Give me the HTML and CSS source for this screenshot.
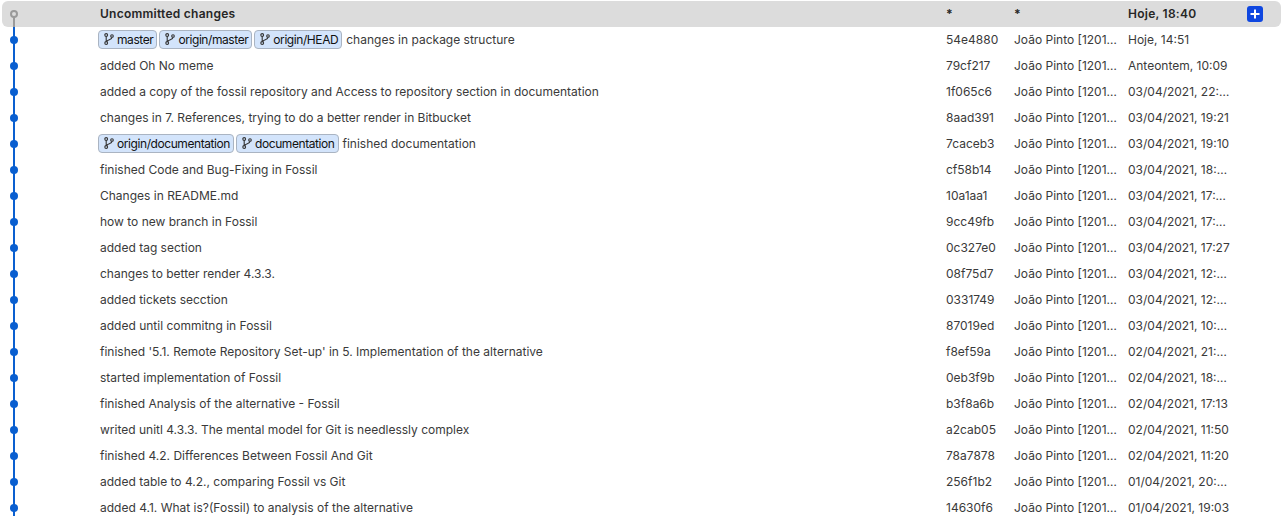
FILE: index.html
```html
<!DOCTYPE html>
<html lang="en">
<head>
    <meta charset="UTF-8">
    <meta name="viewport" content="width=device-width, initial-scale=1.0">
    <title>Commit history</title>
    <link rel="stylesheet" href="styles.css">
</head>
<body>
    <svg class="icon-defs" width="0" height="0">
        <symbol id="branch" viewBox="0 0 10 12">
            <circle cx="2.2" cy="2" r="1.4"/>
            <circle cx="2.2" cy="10" r="1.4"/>
            <circle cx="8" cy="3" r="1.3"/>
            <path d="M2.2 3.4V8.6M8 4.3C8 7 3.4 6.4 2.6 8.7"/>
        </symbol>
    </svg>

    <div class="history">
        <!-- Uncommitted changes -->
        <div class="row row-head">
            <div class="graph graph-first"><span class="dot dot-open"></span></div>
            <div class="subject">Uncommitted changes</div>
            <div class="hash star">*</div>
            <div class="author star">*</div>
            <div class="date">Hoje, 18:40</div>
            <div class="add"><svg width="16" height="16" viewBox="0 0 16 16"><rect width="16" height="16" rx="3" fill="#0f47e0"/><path d="M8 3.5V12.5M3.5 8H12.5" stroke="#fff" stroke-width="2"/></svg></div>
        </div>

        <div class="row">
            <div class="graph"><span class="dot"></span></div>
            <div class="subject subject-tags">
                <span class="tag"><svg class="tag-icon"><use href="#branch"/></svg>master</span>
                <span class="tag"><svg class="tag-icon"><use href="#branch"/></svg>origin/master</span>
                <span class="tag"><svg class="tag-icon"><use href="#branch"/></svg>origin/HEAD</span>
                <span class="msg">changes in package structure</span>
            </div>
            <div class="hash">54e4880</div>
            <div class="author">João Pinto [1201…</div>
            <div class="date">Hoje, 14:51</div>
        </div>
        <div class="row">
            <div class="graph"><span class="dot"></span></div>
            <div class="subject">added Oh No meme</div>
            <div class="hash">79cf217</div>
            <div class="author">João Pinto [1201…</div>
            <div class="date">Anteontem, 10:09</div>
        </div>
        <div class="row">
            <div class="graph"><span class="dot"></span></div>
            <div class="subject">added a copy of the fossil repository and Access to repository section in documentation</div>
            <div class="hash">1f065c6</div>
            <div class="author">João Pinto [1201…</div>
            <div class="date">03/04/2021, 22:…</div>
        </div>
        <div class="row">
            <div class="graph"><span class="dot"></span></div>
            <div class="subject">changes in 7. References, trying to do a better render in Bitbucket</div>
            <div class="hash">8aad391</div>
            <div class="author">João Pinto [1201…</div>
            <div class="date">03/04/2021, 19:21</div>
        </div>
        <div class="row">
            <div class="graph"><span class="dot"></span></div>
            <div class="subject subject-tags">
                <span class="tag"><svg class="tag-icon"><use href="#branch"/></svg>origin/documentation</span>
                <span class="tag"><svg class="tag-icon"><use href="#branch"/></svg>documentation</span>
                <span class="msg">finished documentation</span>
            </div>
            <div class="hash">7caceb3</div>
            <div class="author">João Pinto [1201…</div>
            <div class="date">03/04/2021, 19:10</div>
        </div>
        <div class="row">
            <div class="graph"><span class="dot"></span></div>
            <div class="subject">finished Code and Bug-Fixing in Fossil</div>
            <div class="hash">cf58b14</div>
            <div class="author">João Pinto [1201…</div>
            <div class="date">03/04/2021, 18:…</div>
        </div>
        <div class="row">
            <div class="graph"><span class="dot"></span></div>
            <div class="subject">Changes in README.md</div>
            <div class="hash">10a1aa1</div>
            <div class="author">João Pinto [1201…</div>
            <div class="date">03/04/2021, 17:…</div>
        </div>
        <div class="row">
            <div class="graph"><span class="dot"></span></div>
            <div class="subject">how to new branch in Fossil</div>
            <div class="hash">9cc49fb</div>
            <div class="author">João Pinto [1201…</div>
            <div class="date">03/04/2021, 17:…</div>
        </div>
        <div class="row">
            <div class="graph"><span class="dot"></span></div>
            <div class="subject">added tag section</div>
            <div class="hash">0c327e0</div>
            <div class="author">João Pinto [1201…</div>
            <div class="date">03/04/2021, 17:27</div>
        </div>
        <div class="row">
            <div class="graph"><span class="dot"></span></div>
            <div class="subject">changes to better render 4.3.3.</div>
            <div class="hash">08f75d7</div>
            <div class="author">João Pinto [1201…</div>
            <div class="date">03/04/2021, 12:…</div>
        </div>
        <div class="row">
            <div class="graph"><span class="dot"></span></div>
            <div class="subject">added tickets secction</div>
            <div class="hash">0331749</div>
            <div class="author">João Pinto [1201…</div>
            <div class="date">03/04/2021, 12:…</div>
        </div>
        <div class="row">
            <div class="graph"><span class="dot"></span></div>
            <div class="subject">added until commitng in Fossil</div>
            <div class="hash">87019ed</div>
            <div class="author">João Pinto [1201…</div>
            <div class="date">03/04/2021, 10:…</div>
        </div>
        <div class="row">
            <div class="graph"><span class="dot"></span></div>
            <div class="subject">finished '5.1. Remote Repository Set-up' in 5. Implementation of the alternative</div>
            <div class="hash">f8ef59a</div>
            <div class="author">João Pinto [1201…</div>
            <div class="date">02/04/2021, 21:…</div>
        </div>
        <div class="row">
            <div class="graph"><span class="dot"></span></div>
            <div class="subject">started implementation of Fossil</div>
            <div class="hash">0eb3f9b</div>
            <div class="author">João Pinto [1201…</div>
            <div class="date">02/04/2021, 18:…</div>
        </div>
        <div class="row">
            <div class="graph"><span class="dot"></span></div>
            <div class="subject">finished Analysis of the alternative - Fossil</div>
            <div class="hash">b3f8a6b</div>
            <div class="author">João Pinto [1201…</div>
            <div class="date">02/04/2021, 17:13</div>
        </div>
        <div class="row">
            <div class="graph"><span class="dot"></span></div>
            <div class="subject">writed unitl 4.3.3. The mental model for Git is needlessly complex</div>
            <div class="hash">a2cab05</div>
            <div class="author">João Pinto [1201…</div>
            <div class="date">02/04/2021, 11:50</div>
        </div>
        <div class="row">
            <div class="graph"><span class="dot"></span></div>
            <div class="subject">finished 4.2. Differences Between Fossil And Git</div>
            <div class="hash">78a7878</div>
            <div class="author">João Pinto [1201…</div>
            <div class="date">02/04/2021, 11:20</div>
        </div>
        <div class="row">
            <div class="graph"><span class="dot"></span></div>
            <div class="subject">added table to 4.2., comparing Fossil vs Git</div>
            <div class="hash">256f1b2</div>
            <div class="author">João Pinto [1201…</div>
            <div class="date">01/04/2021, 20:…</div>
        </div>
        <div class="row">
            <div class="graph"><span class="dot"></span></div>
            <div class="subject">added 4.1. What is?(Fossil) to analysis of the alternative</div>
            <div class="hash">14630f6</div>
            <div class="author">João Pinto [1201…</div>
            <div class="date">01/04/2021, 19:03</div>
        </div>
    </div>
</body>
</html>
```

FILE: styles.css
```css
/* Page */
html, body {
    height: 100%;
}

body {
    margin: 0;
    background-color: #ffffff;
    color: #3a3a3a;
    font-family: Inter, "Liberation Sans", sans-serif;
    font-size: 12px;
    overflow: hidden;
}

.icon-defs {
    display: block;
    height: 0;
}

/* Commit list */
.history {
    padding: 1px 4px 0 2px;
}

.row {
    display: grid;
    grid-template-columns: 98px 846px 68px 114px 119px 1fr;
    align-items: center;
    height: 26px;
    white-space: nowrap;
}

.subject, .hash, .author, .date {
    padding-bottom: 2px;
}

.row-head {
    background-color: #dcdcdc;
    border-radius: 6px;
    color: #262626;
    font-weight: 600;
    letter-spacing: 0.25px;
}

/* Graph column */
.graph {
    position: relative;
    align-self: stretch;
}

.graph::before {
    content: "";
    position: absolute;
    left: 11px;
    top: 0;
    bottom: 0;
    width: 2px;
    background-color: #0a5fd0;
}

.graph-first::before {
    top: 13px;
    background-color: #9a9a9a;
}

.dot {
    position: absolute;
    left: 8px;
    top: 9px;
    width: 8px;
    height: 8px;
    border-radius: 50%;
    background-color: #0a5fd0;
}

.dot-open {
    box-sizing: border-box;
    background-color: #dcdcdc;
    border: 2px solid #9a9a9a;
}

/* Commit text and branch tags */
.subject {
    display: flex;
    align-items: center;
    gap: 3px;
}

.subject-tags {
    margin-left: -2px;
}

.tag {
    display: inline-flex;
    align-items: center;
    box-sizing: border-box;
    height: 19px;
    padding: 0 3px 0 5px;
    background-color: #d3e4fb;
    border: 1px solid #aab4c2;
    border-radius: 4px;
    color: #111111;
    letter-spacing: -0.42px;
}

.tag + .tag {
    margin-left: -1px;
}

.tag-icon {
    width: 10px;
    height: 12px;
    margin-right: 3px;
    fill: none;
    stroke: #333333;
    stroke-width: 1.1;
}

.msg {
    margin-left: 1px;
}

.row-head .star {
    align-self: start;
    padding: 5px 0 0;
    font-weight: 700;
}

.add {
    display: flex;
}
```
